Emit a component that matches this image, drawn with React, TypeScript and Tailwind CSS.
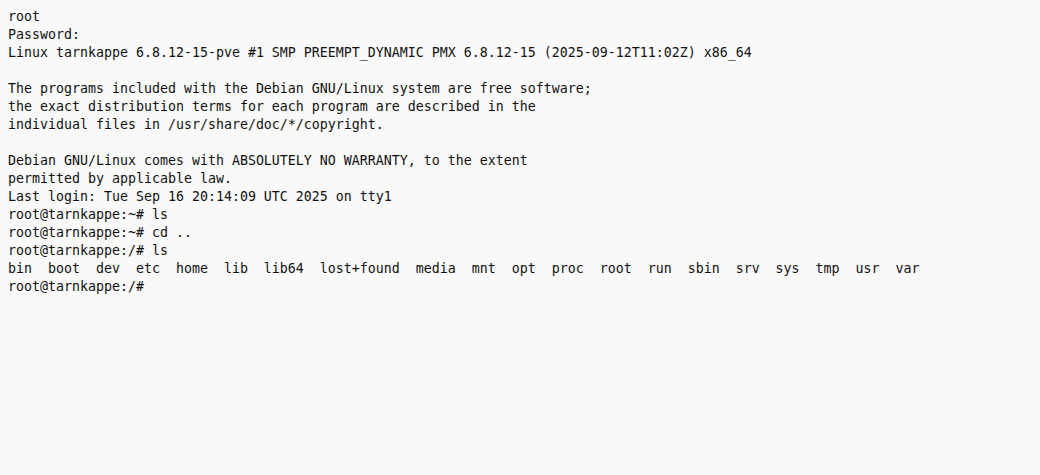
const lines = [
  "root",
  "Password:",
  "Linux tarnkappe 6.8.12-15-pve #1 SMP PREEMPT_DYNAMIC PMX 6.8.12-15 (2025-09-12T11:02Z) x86_64",
  "",
  "The programs included with the Debian GNU/Linux system are free software;",
  "the exact distribution terms for each program are described in the",
  "individual files in /usr/share/doc/*/copyright.",
  "",
  "Debian GNU/Linux comes with ABSOLUTELY NO WARRANTY, to the extent",
  "permitted by applicable law.",
  "Last login: Tue Sep 16 20:14:09 UTC 2025 on tty1",
  "root@tarnkappe:~# ls",
  "root@tarnkappe:~# cd ..",
  "root@tarnkappe:/# ls",
  "bin  boot  dev  etc  home  lib  lib64  lost+found  media  mnt  opt  proc  root  run  sbin  srv  sys  tmp  usr  var",
  "root@tarnkappe:/# ",
];

export default function App() {
  return (
    <div className="w-[1040px] h-[475px] bg-[#f9f9f9] overflow-hidden">
      {/* Terminal */}
      <div className="pl-2 pt-2 font-['DejaVu_Sans_Mono',monospace] text-[13.29px] leading-[18px] text-[#111]">
        {lines.map((line, i) => (
          <div key={i} className="whitespace-pre h-[18px]">
            {line}
          </div>
        ))}
      </div>
    </div>
  );
}
